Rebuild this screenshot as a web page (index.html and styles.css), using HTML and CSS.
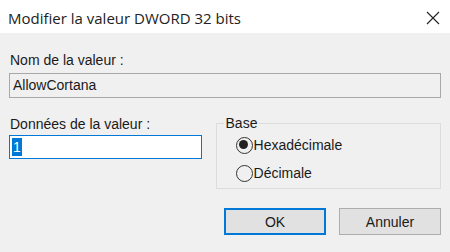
FILE: index.html
```html
<!DOCTYPE html>
<html lang="fr">
<head>
    <meta charset="UTF-8">
    <title>Modifier la valeur DWORD 32 bits</title>
    <link rel="stylesheet" href="styles.css">
</head>
<body>
    <div class="dialog">
        <div class="titlebar">
            <span class="title">Modifier la valeur DWORD 32 bits</span>
            <svg class="close" width="14" height="14" viewBox="0 0 14 14">
                <path d="M1 1 L13 13 M13 1 L1 13" stroke="#222" stroke-width="1.1" fill="none"/>
            </svg>
        </div>

        <div class="content">
            <div class="label">Nom de la valeur :</div>
            <div class="namebox">AllowCortana</div>

            <div class="row">
                <div class="data">
                    <div class="label">Données de la valeur :</div>
                    <div class="databox"><span class="sel">1</span></div>
                </div>
                <fieldset class="base">
                    <legend>Base</legend>
                    <div class="radio"><span class="dot checked"></span>Hexadécimale</div>
                    <div class="radio"><span class="dot"></span>Décimale</div>
                </fieldset>
            </div>

            <div class="buttons">
                <button class="btn default">OK</button>
                <button class="btn">Annuler</button>
            </div>
        </div>
    </div>
</body>
</html>
```

FILE: styles.css
```css
html, body {
    margin: 0;
    padding: 0;
    background: #f0f0f0;
}

.dialog {
    width: 450px;
    height: 252px;
    font-family: "Liberation Sans", Arial, sans-serif;
    font-size: 14px;
    color: #1a1a1a;
}

.titlebar {
    height: 33px;
    background: #fff;
    display: flex;
    align-items: center;
    justify-content: space-between;
    padding: 0 10px 0 8px;
}

.title {
    font-family: "Open Sans", "Noto Sans", sans-serif;
    font-size: 15px;
    color: #222;
    margin-top: 3px;
}

.close {
    margin-top: 3px;
}

.content {
    height: 219px;
    box-sizing: border-box;
    padding: 19px 9px 0 9px;
}

.label {
    line-height: 16px;
    padding-left: 1px;
}

.namebox {
    margin-top: 5px;
    height: 25px;
    box-sizing: border-box;
    border: 1px solid #a8a8a8;
    padding-left: 3px;
    line-height: 23px;
    background: #f0f0f0;
}

.row {
    display: flex;
    margin-top: 17px;
}

.data {
    width: 193px;
    padding-top: 1px;
}

.databox {
    margin-top: 3px;
    height: 24px;
    box-sizing: border-box;
    border: 1px solid #0078d7;
    background: #fff;
    padding: 2px 0 0 2px;
}

.sel {
    display: inline-block;
    background: #0078d7;
    color: #fff;
    line-height: 18px;
    padding: 0 1px;
}

.base {
    margin: 0 0 0 14px;
    width: 226px;
    height: 74px;
    box-sizing: border-box;
    border: 1px solid #dcdcdc;
    padding: 0 0 0 19px;
}

.base legend {
    padding: 0 2px;
    margin-left: -12px;
    line-height: 16px;
}

.radio {
    display: flex;
    align-items: center;
    height: 28px;
}

.dot {
    width: 17px;
    height: 17px;
    box-sizing: border-box;
    border: 1.5px solid #333;
    border-radius: 50%;
    margin-right: 1px;
    position: relative;
}

.dot.checked::after {
    content: "";
    position: absolute;
    left: 2.5px;
    top: 2.5px;
    width: 9px;
    height: 9px;
    border-radius: 50%;
    background: #222;
}

.buttons {
    display: flex;
    justify-content: flex-end;
    gap: 13px;
    margin-top: 19px;
}

.btn {
    width: 102px;
    height: 27px;
    font-family: "Liberation Sans", Arial, sans-serif;
    font-size: 14px;
    color: #1a1a1a;
    background: #e1e1e1;
    border: 1px solid #adadad;
}

.btn.default {
    border: 2px solid #0078d7;
}
```
